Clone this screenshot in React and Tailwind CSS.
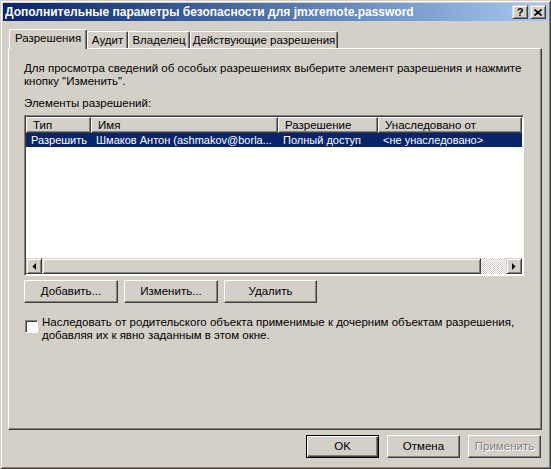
import React from "react";

const raised =
  "border border-t-white border-l-white border-r-[#404040] border-b-[#404040] shadow-[inset_-1px_-1px_#808080]";
const sunken =
  "border border-t-[#808080] border-l-[#808080] border-r-white border-b-white shadow-[inset_1px_1px_#404040]";
const scrollPart =
  "border border-t-[#d4d0c8] border-l-[#d4d0c8] border-r-[#404040] border-b-[#404040] shadow-[inset_1px_1px_#fff,inset_-1px_-1px_#808080]";

const columns = [
  { title: "Тип", width: "w-[65px]" },
  { title: "Имя", width: "w-[187px]" },
  { title: "Разрешение", width: "w-[100px]" },
  { title: "Унаследовано от", width: "flex-1" },
];

const row = ["Разрешить", "Шмаков Антон (ashmakov@borla...", "Полный доступ", "<не унаследовано>"];

function PushButton({ children, isDefault, disabled, className = "" }) {
  const frame = isDefault
    ? "border border-black shadow-[inset_1px_1px_#fff,inset_-1px_-1px_#404040,inset_-2px_-2px_#808080]"
    : raised;

  return (
    <button
      type="button"
      className={`flex h-[23px] items-center justify-center bg-[#d4d0c8] ${frame} ${
        disabled ? "text-[#808080] [text-shadow:1px_1px_#fff]" : "text-black"
      } ${className}`}
    >
      {children}
    </button>
  );
}

function Tab({ label, selected, width }) {
  return (
    <div
      className={`flex items-center justify-center whitespace-nowrap rounded-t-[2px] border-t border-l border-r border-t-white border-l-white border-r-[#404040] bg-[#d4d0c8] shadow-[inset_-1px_0_#808080] ${width} ${
        selected ? "relative z-10 -mb-px h-[20px] pb-[2px]" : "h-[17px]"
      }`}
    >
      {label}
    </div>
  );
}

function ArrowLeft() {
  return (
    <svg width="4" height="7" viewBox="0 0 4 7">
      <polygon points="4,0 4,7 0.5,3.5" fill="#000" />
    </svg>
  );
}

function ArrowRight() {
  return (
    <svg width="4" height="7" viewBox="0 0 4 7">
      <polygon points="0,0 0,7 3.5,3.5" fill="#000" />
    </svg>
  );
}

export default function App() {
  return (
    <div
      className="flex h-[469px] w-[551px] flex-col border border-t-[#d4d0c8] border-l-[#d4d0c8] border-r-[#404040] border-b-[#404040] bg-[#d4d0c8] p-[2px] text-[11.5px] leading-[13px] text-black shadow-[inset_1px_1px_#fff,inset_-1px_-1px_#808080]"
      style={{ fontFamily: '"Liberation Sans", Arial, sans-serif' }}
    >
      {/* caption */}
      <div className="flex h-[18px] items-center bg-gradient-to-r from-[#0a246a] to-[#a6caf0] pl-[2px] pr-[2px]">
        <span className="flex-1 truncate text-[12px] font-bold text-white">
          Дополнительные параметры безопасности для jmxremote.password
        </span>
        <div className="flex gap-[2px]">
          <div className={`flex h-[14px] w-[16px] items-center justify-center bg-[#d4d0c8] ${scrollPart}`}>
            <span className="text-[11px] font-bold leading-none">?</span>
          </div>
          <div className={`flex h-[14px] w-[16px] items-center justify-center bg-[#d4d0c8] ${scrollPart}`}>
            <svg width="8" height="7" viewBox="0 0 8 7">
              <path d="M0.5 0.5 L7.5 6.5 M7.5 0.5 L0.5 6.5" stroke="#000" strokeWidth="1.6" />
            </svg>
          </div>
        </div>
      </div>

      {/* tabs */}
      <div className="ml-[6px] mt-[8px] flex items-end">
        <Tab label="Разрешения" selected width="w-[78px]" />
        <Tab label="Аудит" width="w-[41px]" />
        <Tab label="Владелец" width="w-[62px]" />
        <Tab label="Действующие разрешения" width="w-[148px]" />
      </div>

      <div className="ml-[5px] flex h-[382px] w-[534px] flex-col border border-t-white border-l-white border-r-[#404040] border-b-[#404040] px-[15px] pt-[13px] shadow-[inset_-1px_-1px_#808080]">
        <p>
          <span className="block whitespace-nowrap">
            Для просмотра сведений об особых разрешениях выберите элемент разрешения и нажмите
          </span>
          <span className="block">кнопку "Изменить".</span>
        </p>

        <p className="mt-[9px]">Элементы разрешений:</p>

        {/* list view */}
        <div className={`mt-[5px] flex h-[161px] w-[500px] flex-col bg-white ${sunken} p-px`}>
          <div className="flex h-[16px] bg-[#d4d0c8]">
            {columns.map((col) => (
              <div
                key={col.title}
                className={`flex items-center whitespace-nowrap pl-[6px] ${col.width} ${raised}`}
              >
                {col.title}
              </div>
            ))}
          </div>
          <div className="flex h-[14px] items-center bg-[#0a246a] text-[11px] text-white">
            {row.map((cell, i) => (
              <div key={i} className={`whitespace-nowrap pl-[5px] ${columns[i].width}`}>
                {cell}
              </div>
            ))}
          </div>
          <div className="flex-1" />
          <div className="flex h-[16px]">
            <div className={`flex w-[16px] items-center justify-center bg-[#d4d0c8] ${scrollPart}`}>
              <ArrowLeft />
            </div>
            <div className={`w-[439px] bg-[#d4d0c8] ${scrollPart}`} />
            <div className="flex-1 bg-[repeating-conic-gradient(#d4d0c8_0_25%,#ffffff_0_50%)] bg-[length:2px_2px]" />
            <div className={`flex w-[16px] items-center justify-center bg-[#d4d0c8] ${scrollPart}`}>
              <ArrowRight />
            </div>
          </div>
        </div>

        <div className="mt-[4px] flex gap-[6px]">
          <PushButton className="w-[94px]">Добавить...</PushButton>
          <PushButton className="w-[94px]">Изменить...</PushButton>
          <PushButton className="w-[93px]">Удалить</PushButton>
        </div>

        <div className="mt-[13px] flex items-start gap-[4px]">
          <div className={`ml-px mt-[4px] h-[13px] w-[13px] shrink-0 bg-white ${sunken}`} />
          <p>
            <span className="block whitespace-nowrap">
              Наследовать от родительского объекта применимые к дочерним объектам разрешения,
            </span>
            <span className="block">добавляя их к явно заданным в этом окне.</span>
          </p>
        </div>
      </div>

      <div className="mt-[5px] flex justify-end gap-[8px] pr-[7px]">
        <PushButton isDefault className="w-[73px]">
          OK
        </PushButton>
        <PushButton className="w-[73px]">Отмена</PushButton>
        <PushButton disabled className="w-[73px]">
          Применить
        </PushButton>
      </div>
    </div>
  );
}
